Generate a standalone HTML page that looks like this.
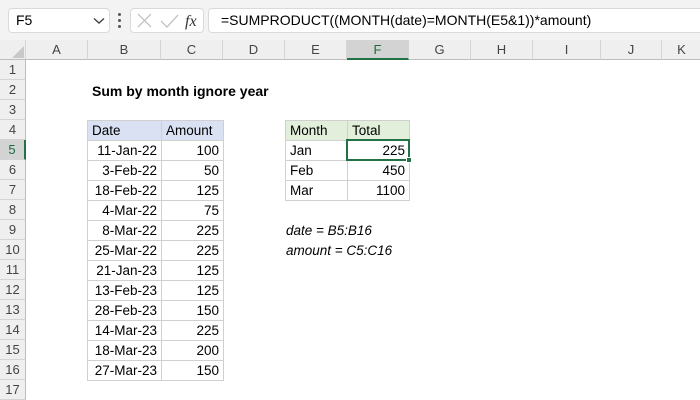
<!DOCTYPE html>
<html><head><meta charset="utf-8"><style>
*{margin:0;padding:0;box-sizing:border-box}
body{width:700px;height:400px;overflow:hidden;background:#fff;font-family:"Liberation Sans",Calibri,sans-serif;font-size:13px;color:#000;position:relative}
.a{position:absolute}
.top{left:0;top:0;width:700px;height:40px;background:#f3f3f3}
.box{background:#fff;border:1px solid #dadada;border-radius:4px}
.ch{top:40px;height:20px;background:#efefef;border-right:1px solid #d4d4d4;border-bottom:1px solid #bdbdbd;text-align:center;line-height:20px;color:#444;font-size:13px}
.rh{left:0;width:26px;height:20px;background:#efefef;border-bottom:1px solid #d4d4d4;border-right:1px solid #bdbdbd;text-align:center;line-height:20px;color:#444}
.g{position:absolute;height:21px;line-height:20px;padding:0 4px;border:1px solid #d0d0d0;white-space:nowrap;font-size:13.5px}
.r{text-align:right}
</style></head><body>
<div class="a top"></div>
<div class="a box" style="left:8px;top:8px;width:102px;height:25px;line-height:23px;padding-left:7px;font-size:14px">F5
<svg class="a" style="left:84px;top:8px" width="12" height="8"><path d="M1 1.5L6 6L11 1.5" stroke="#444" stroke-width="1.4" fill="none"/></svg></div>
<div class="a" style="left:118px;top:13px;width:3px;height:3px;background:#555;border-radius:2px"></div>
<div class="a" style="left:118px;top:19px;width:3px;height:3px;background:#555;border-radius:2px"></div>
<div class="a" style="left:118px;top:25px;width:3px;height:3px;background:#555;border-radius:2px"></div>
<div class="a box" style="left:130px;top:8px;width:74px;height:25px"></div>
<svg class="a" style="left:136px;top:12px" width="68" height="18"><path d="M2 2L15 15M15 2L2 15" stroke="#bbb" stroke-width="1.2"/><path d="M25 9L31 15L42 3" stroke="#bbb" stroke-width="1.2" fill="none"/><text x="49" y="14" font-family="Liberation Serif" font-style="italic" font-size="16" fill="#333">fx</text></svg>
<div class="a box" style="left:208px;top:8px;width:500px;height:25px;line-height:23px;padding-left:12px;font-size:14px">=SUMPRODUCT((MONTH(date)=MONTH(E5&amp;1))*amount)</div>

<div class="a ch" style="left:0;width:26px"><svg class="a" style="left:12px;top:6px" width="12" height="12"><path d="M12 0V12H0Z" fill="#c8c8c8"/></svg></div>
<div class="a ch" style="left:26px;width:62px">A</div>
<div class="a ch" style="left:88px;width:73px">B</div>
<div class="a ch" style="left:161px;width:62px">C</div>
<div class="a ch" style="left:223px;width:62px">D</div>
<div class="a ch" style="left:285px;width:62px">E</div>
<div class="a ch" style="left:347px;width:62px;background:#d3d3d3;border-bottom:2px solid #217346;color:#1e6b3e">F</div>
<div class="a ch" style="left:409px;width:62px">G</div>
<div class="a ch" style="left:471px;width:62px">H</div>
<div class="a ch" style="left:533px;width:68px">I</div>
<div class="a ch" style="left:601px;width:61px">J</div>
<div class="a ch" style="left:662px;width:40px">K</div>

<div class="a rh" style="top:60px">1</div>
<div class="a rh" style="top:80px">2</div>
<div class="a rh" style="top:100px">3</div>
<div class="a rh" style="top:120px">4</div>
<div class="a rh" style="top:140px;background:#d3d3d3;border-right:2px solid #217346;color:#1e6b3e">5</div>
<div class="a rh" style="top:160px">6</div>
<div class="a rh" style="top:180px">7</div>
<div class="a rh" style="top:200px">8</div>
<div class="a rh" style="top:220px">9</div>
<div class="a rh" style="top:240px">10</div>
<div class="a rh" style="top:260px">11</div>
<div class="a rh" style="top:280px">12</div>
<div class="a rh" style="top:300px">13</div>
<div class="a rh" style="top:320px">14</div>
<div class="a rh" style="top:340px">15</div>
<div class="a rh" style="top:360px">16</div>
<div class="a rh" style="top:380px">17</div>

<div class="a" style="left:92px;top:81px;font-weight:bold;font-size:14px;line-height:20px">Sum by month ignore year</div>

<div class="g" style="left:87px;top:120px;width:75px;background:#d9e1f2">Date</div>
<div class="g" style="left:161px;top:120px;width:63px;background:#d9e1f2">Amount</div>
<div class="g r" style="left:87px;top:140px;width:75px">11-Jan-22</div><div class="g r" style="left:161px;top:140px;width:63px">100</div>
<div class="g r" style="left:87px;top:160px;width:75px">3-Feb-22</div><div class="g r" style="left:161px;top:160px;width:63px">50</div>
<div class="g r" style="left:87px;top:180px;width:75px">18-Feb-22</div><div class="g r" style="left:161px;top:180px;width:63px">125</div>
<div class="g r" style="left:87px;top:200px;width:75px">4-Mar-22</div><div class="g r" style="left:161px;top:200px;width:63px">75</div>
<div class="g r" style="left:87px;top:220px;width:75px">8-Mar-22</div><div class="g r" style="left:161px;top:220px;width:63px">225</div>
<div class="g r" style="left:87px;top:240px;width:75px">25-Mar-22</div><div class="g r" style="left:161px;top:240px;width:63px">225</div>
<div class="g r" style="left:87px;top:260px;width:75px">21-Jan-23</div><div class="g r" style="left:161px;top:260px;width:63px">125</div>
<div class="g r" style="left:87px;top:280px;width:75px">13-Feb-23</div><div class="g r" style="left:161px;top:280px;width:63px">125</div>
<div class="g r" style="left:87px;top:300px;width:75px">28-Feb-23</div><div class="g r" style="left:161px;top:300px;width:63px">150</div>
<div class="g r" style="left:87px;top:320px;width:75px">14-Mar-23</div><div class="g r" style="left:161px;top:320px;width:63px">225</div>
<div class="g r" style="left:87px;top:340px;width:75px">18-Mar-23</div><div class="g r" style="left:161px;top:340px;width:63px">200</div>
<div class="g r" style="left:87px;top:360px;width:75px">27-Mar-23</div><div class="g r" style="left:161px;top:360px;width:63px">150</div>

<div class="g" style="left:285px;top:120px;width:63px;background:#e2efda">Month</div>
<div class="g" style="left:347px;top:120px;width:63px;background:#e2efda">Total</div>
<div class="g" style="left:285px;top:140px;width:63px">Jan</div><div class="g r" style="left:347px;top:140px;width:63px">225</div>
<div class="g" style="left:285px;top:160px;width:63px">Feb</div><div class="g r" style="left:347px;top:160px;width:63px">450</div>
<div class="g" style="left:285px;top:180px;width:63px">Mar</div><div class="g r" style="left:347px;top:180px;width:63px">1100</div>
<div class="a" style="left:346px;top:139px;width:64px;height:22px;border:2px solid #217346"></div>
<div class="a" style="left:406px;top:157px;width:6px;height:6px;background:#217346;border:1px solid #fff"></div>

<div class="a" style="left:286px;top:221px;font-style:italic;font-size:13.5px;line-height:20px">date = B5:B16</div>
<div class="a" style="left:286px;top:241px;font-style:italic;font-size:13.5px;line-height:20px">amount = C5:C16</div>
</body></html>
